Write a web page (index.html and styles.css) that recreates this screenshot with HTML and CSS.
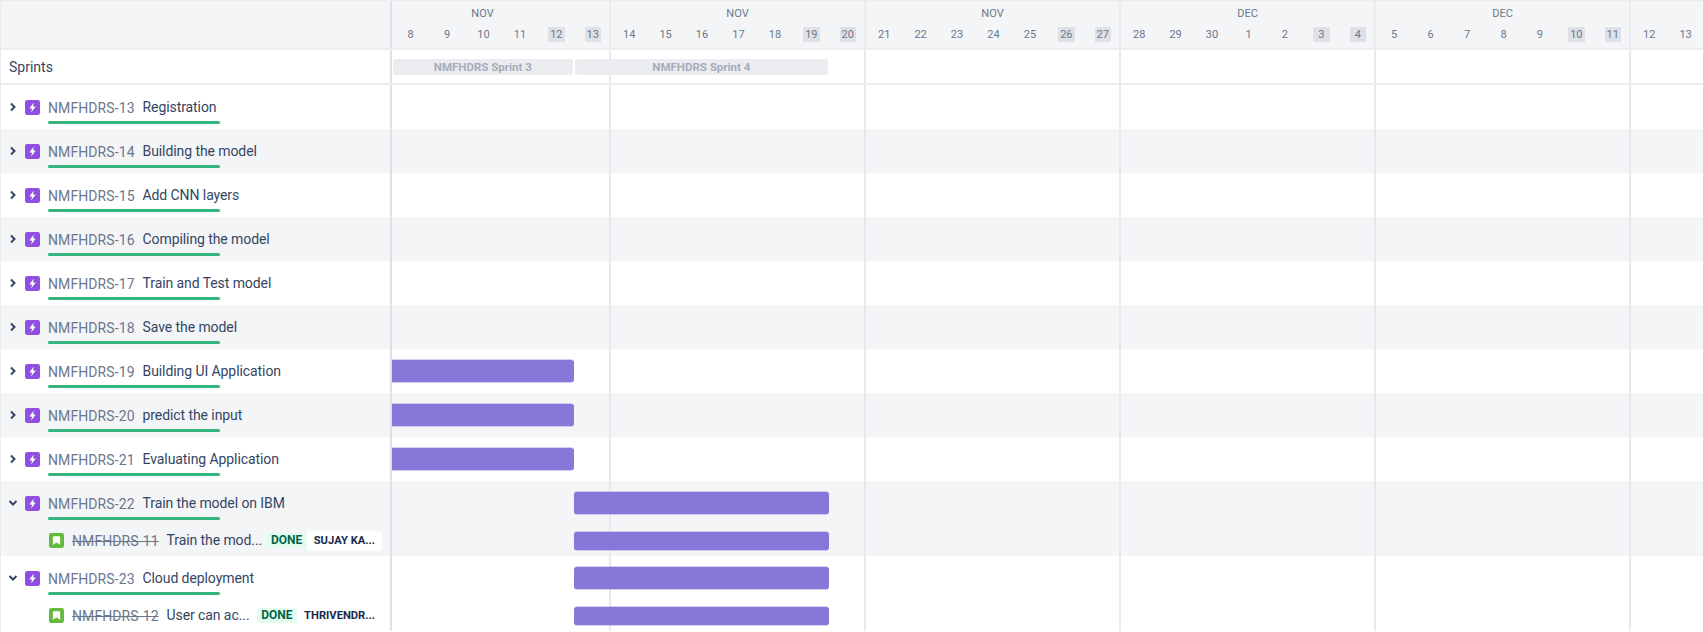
FILE: index.html
```html
<!DOCTYPE html>
<html lang="en">
<head>
  <meta charset="UTF-8" />
  <title>Roadmap</title>
  <link rel="stylesheet" href="styles.css">
</head>
<body>
  <svg class="defs" width="0" height="0">
    <symbol id="epic" viewBox="0 0 16 16">
      <rect width="16" height="16" rx="2.5" fill="#904ee2"/>
      <path d="M9.400 2.600 4.600 9h2.900L6.600 13.400l4.800-6.500H8.500z" fill="#fff"/>
    </symbol>
    <symbol id="story" viewBox="0 0 16 16">
      <rect width="16" height="16" rx="2.5" fill="#63ba3c"/>
      <path d="M4.800 3.500h6.400c.4 0 .7.3.7.7v8.300L8 10l-3.900 2.500V4.200c0-.4.300-.7.700-.7z" fill="#fff"/>
    </symbol>
    <symbol id="right" viewBox="0 0 8 10">
      <path d="M2 1.500 5.500 5 2 8.500" fill="none" stroke="#344563" stroke-width="2"/>
    </symbol>
    <symbol id="down" viewBox="0 0 10 8">
      <path d="M1.500 2 5 5.500 8.500 2" fill="none" stroke="#344563" stroke-width="2"/>
    </symbol>
  </svg>

  <div class="roadmap">
    <div class="row head">
      <div class="side"></div>
      <div class="weeks">
        <div class="week first">
          <div class="month">NOV</div>
          <div class="days"><span></span><span>8</span><span>9</span><span>10</span><span>11</span><span class="off">12</span><span class="off">13</span></div>
        </div>
        <div class="week">
          <div class="month">NOV</div>
          <div class="days"><span>14</span><span>15</span><span>16</span><span>17</span><span>18</span><span class="off">19</span><span class="off">20</span></div>
        </div>
        <div class="week">
          <div class="month">NOV</div>
          <div class="days"><span>21</span><span>22</span><span>23</span><span>24</span><span>25</span><span class="off">26</span><span class="off">27</span></div>
        </div>
        <div class="week">
          <div class="month">DEC</div>
          <div class="days"><span>28</span><span>29</span><span>30</span><span>1</span><span>2</span><span class="off">3</span><span class="off">4</span></div>
        </div>
        <div class="week">
          <div class="month">DEC</div>
          <div class="days"><span>5</span><span>6</span><span>7</span><span>8</span><span>9</span><span class="off">10</span><span class="off">11</span></div>
        </div>
        <div class="week">
          <div class="month">&nbsp;</div>
          <div class="days"><span>12</span><span>13</span></div>
        </div>
      </div>
    </div>

    <div class="row sprints">
      <div class="side">Sprints</div>
      <div class="track">
        <div class="sprint span-a">NMFHDRS Sprint 3</div>
        <div class="sprint span-b">NMFHDRS Sprint 4</div>
      </div>
    </div>

    <div class="row epic">
      <div class="side">
        <svg class="chev"><use href="#right"/></svg>
        <svg class="icon"><use href="#epic"/></svg>
        <span class="key">NMFHDRS-13</span><span class="name">Registration</span>
        <div class="progress"></div>
      </div>
      <div class="track"></div>
    </div>

    <div class="row epic alt">
      <div class="side">
        <svg class="chev"><use href="#right"/></svg>
        <svg class="icon"><use href="#epic"/></svg>
        <span class="key">NMFHDRS-14</span><span class="name">Building the model</span>
        <div class="progress"></div>
      </div>
      <div class="track"></div>
    </div>

    <div class="row epic">
      <div class="side">
        <svg class="chev"><use href="#right"/></svg>
        <svg class="icon"><use href="#epic"/></svg>
        <span class="key">NMFHDRS-15</span><span class="name">Add CNN layers</span>
        <div class="progress"></div>
      </div>
      <div class="track"></div>
    </div>

    <div class="row epic alt">
      <div class="side">
        <svg class="chev"><use href="#right"/></svg>
        <svg class="icon"><use href="#epic"/></svg>
        <span class="key">NMFHDRS-16</span><span class="name">Compiling the model</span>
        <div class="progress"></div>
      </div>
      <div class="track"></div>
    </div>

    <div class="row epic">
      <div class="side">
        <svg class="chev"><use href="#right"/></svg>
        <svg class="icon"><use href="#epic"/></svg>
        <span class="key">NMFHDRS-17</span><span class="name">Train and Test model</span>
        <div class="progress"></div>
      </div>
      <div class="track"></div>
    </div>

    <div class="row epic alt">
      <div class="side">
        <svg class="chev"><use href="#right"/></svg>
        <svg class="icon"><use href="#epic"/></svg>
        <span class="key">NMFHDRS-18</span><span class="name">Save the model</span>
        <div class="progress"></div>
      </div>
      <div class="track"></div>
    </div>

    <div class="row epic">
      <div class="side">
        <svg class="chev"><use href="#right"/></svg>
        <svg class="icon"><use href="#epic"/></svg>
        <span class="key">NMFHDRS-19</span><span class="name">Building UI Application</span>
        <div class="progress"></div>
      </div>
      <div class="track"><div class="bar span-a"></div></div>
    </div>

    <div class="row epic alt">
      <div class="side">
        <svg class="chev"><use href="#right"/></svg>
        <svg class="icon"><use href="#epic"/></svg>
        <span class="key">NMFHDRS-20</span><span class="name">predict the input</span>
        <div class="progress"></div>
      </div>
      <div class="track"><div class="bar span-a"></div></div>
    </div>

    <div class="row epic">
      <div class="side">
        <svg class="chev"><use href="#right"/></svg>
        <svg class="icon"><use href="#epic"/></svg>
        <span class="key">NMFHDRS-21</span><span class="name">Evaluating Application</span>
        <div class="progress"></div>
      </div>
      <div class="track"><div class="bar span-a"></div></div>
    </div>

    <div class="row epic alt">
      <div class="side">
        <svg class="chev open"><use href="#down"/></svg>
        <svg class="icon"><use href="#epic"/></svg>
        <span class="key">NMFHDRS-22</span><span class="name">Train the model on IBM</span>
        <div class="progress"></div>
      </div>
      <div class="track"><div class="bar span-b"></div></div>
    </div>

    <div class="row story alt">
      <div class="side">
        <svg class="icon"><use href="#story"/></svg>
        <span class="key">NMFHDRS-11</span><span class="name">Train the mod...</span>
        <span class="status">DONE</span>
        <span class="assignee">SUJAY KA...</span>
      </div>
      <div class="track"><div class="bar small span-b"></div></div>
    </div>

    <div class="row epic">
      <div class="side">
        <svg class="chev open"><use href="#down"/></svg>
        <svg class="icon"><use href="#epic"/></svg>
        <span class="key">NMFHDRS-23</span><span class="name">Cloud deployment</span>
        <div class="progress"></div>
      </div>
      <div class="track"><div class="bar span-b"></div></div>
    </div>

    <div class="row story">
      <div class="side">
        <svg class="icon"><use href="#story"/></svg>
        <span class="key">NMFHDRS-12</span><span class="name">User can ac...</span>
        <span class="status">DONE</span>
        <span class="assignee">THRIVENDR...</span>
      </div>
      <div class="track"><div class="bar small span-b"></div></div>
    </div>
  </div>
</body>
</html>
```

FILE: styles.css
```css
* {
  margin: 0;
  padding: 0;
  box-sizing: border-box;
}

body {
  width: 1703px;
  height: 632px;
  overflow: hidden;
  background: #fff;
  font-family: Roboto, "Liberation Sans", sans-serif;
  color: #344563;
}

.defs {
  display: block;
  height: 0;
}

.roadmap {
  display: flex;
  flex-direction: column;
  border-left: 1px solid #ebecf0;
}

.row {
  display: flex;
  flex: none;
}

.side {
  flex: none;
  width: 391px;
  display: flex;
  align-items: center;
  border-right: 2px solid #dfe1e6;
}

/* header */
.head {
  height: 50px;
  background: #f4f5f7;
  border-top: 1px solid #ebecf0;
  border-bottom: 2px solid #ebecf0;
}

.weeks {
  flex: none;
  display: flex;
  overflow: hidden;
  width: 1311px;
}

.week {
  flex: none;
  width: 255px;
  border-right: 2px solid #ebecf0;
}

.week.first {
  margin-left: -36px;
}

.month {
  height: 26px;
  padding-top: 5px;
  text-align: center;
  font-size: 11px;
  line-height: 15px;
  color: #6b778c;
}

.days {
  display: flex;
  font-size: 11px;
  color: #6b778c;
}

.days span {
  flex: none;
  width: 36.43px;
  height: 15px;
  display: flex;
  justify-content: center;
  align-items: center;
  line-height: 15px;
}

.days .off {
  background: #dfe1e6;
  border-radius: 3px;
  background-clip: content-box;
  padding: 0 10.2px;
}

/* timeline */
.track {
  flex: none;
  width: 1311px;
  display: grid;
  grid-template-columns: repeat(36, 36.43px);
  align-items: center;
  background-image: linear-gradient(to right, #e8e9ee 2px, transparent 2px);
  background-size: 255px 100%;
  background-position: 217px 0;
}

.span-a {
  grid-column: 1 / 6;
}

.span-b {
  grid-column: 6 / 13;
}

.bar {
  height: 24px;
  background: #8777d9;
  background-clip: padding-box;
  border-top: 1px solid rgba(135, 119, 217, 0.35);
  border-bottom: 1px solid rgba(135, 119, 217, 0.35);
  border-radius: 0 3px 3px 0;
}

.bar.span-b {
  border-radius: 3px;
}

.bar.small {
  height: 20px;
}

/* sprints */
.sprints {
  height: 35px;
  border-bottom: 2px solid #ebecf0;
}

.sprints .side {
  padding-left: 8px;
  font-size: 14px;
  color: #344563;
}

.sprint {
  height: 16px;
  margin: 0 1.5px 0 1px;
  background: #ebecf0;
  border-radius: 3px;
  text-align: center;
  font-size: 11.5px;
  font-weight: 700;
  line-height: 16px;
  color: #a5adba;
}

/* rows */
.epic {
  height: 44px;
}

.story {
  height: 31px;
}

.alt {
  background: #f4f5f7;
}

.epic .side {
  position: relative;
  padding: 15px 0 0 7px;
  align-items: flex-start;
}

.chev {
  flex: none;
  width: 10px;
  height: 10px;
  margin: 2px 7px 0 0;
}

.icon {
  flex: none;
  width: 15px;
  height: 15px;
  margin-right: 8px;
}

.key {
  flex: none;
  width: 94.5px;
  font-size: 14px;
  letter-spacing: 0.1px;
  line-height: 16px;
  color: #6b778c;
}

.name {
  margin-top: -1px;
  font-size: 14px;
  letter-spacing: -0.08px;
  line-height: 16px;
  white-space: nowrap;
}

.progress {
  position: absolute;
  left: 47px;
  top: 36px;
  width: 172px;
  height: 3px;
  background: #36b37e;
  border-radius: 2px;
}

.story .side {
  padding-left: 48px;
}

.story .key {
  text-decoration: line-through;
}

.story .name {
  flex: 1;
}

.status {
  flex: none;
  height: 15px;
  padding: 0 4.5px;
  background: #e3fcef;
  border-radius: 3px;
  font-size: 12px;
  font-weight: 700;
  line-height: 15px;
  color: #006644;
}

.assignee {
  flex: none;
  height: 20px;
  margin-right: 8px;
  padding: 0 7px;
  border-radius: 3px;
  font-size: 11.2px;
  font-weight: 700;
  line-height: 20px;
  color: #172b4d;
}

.alt .assignee {
  background: #fff;
}
```
